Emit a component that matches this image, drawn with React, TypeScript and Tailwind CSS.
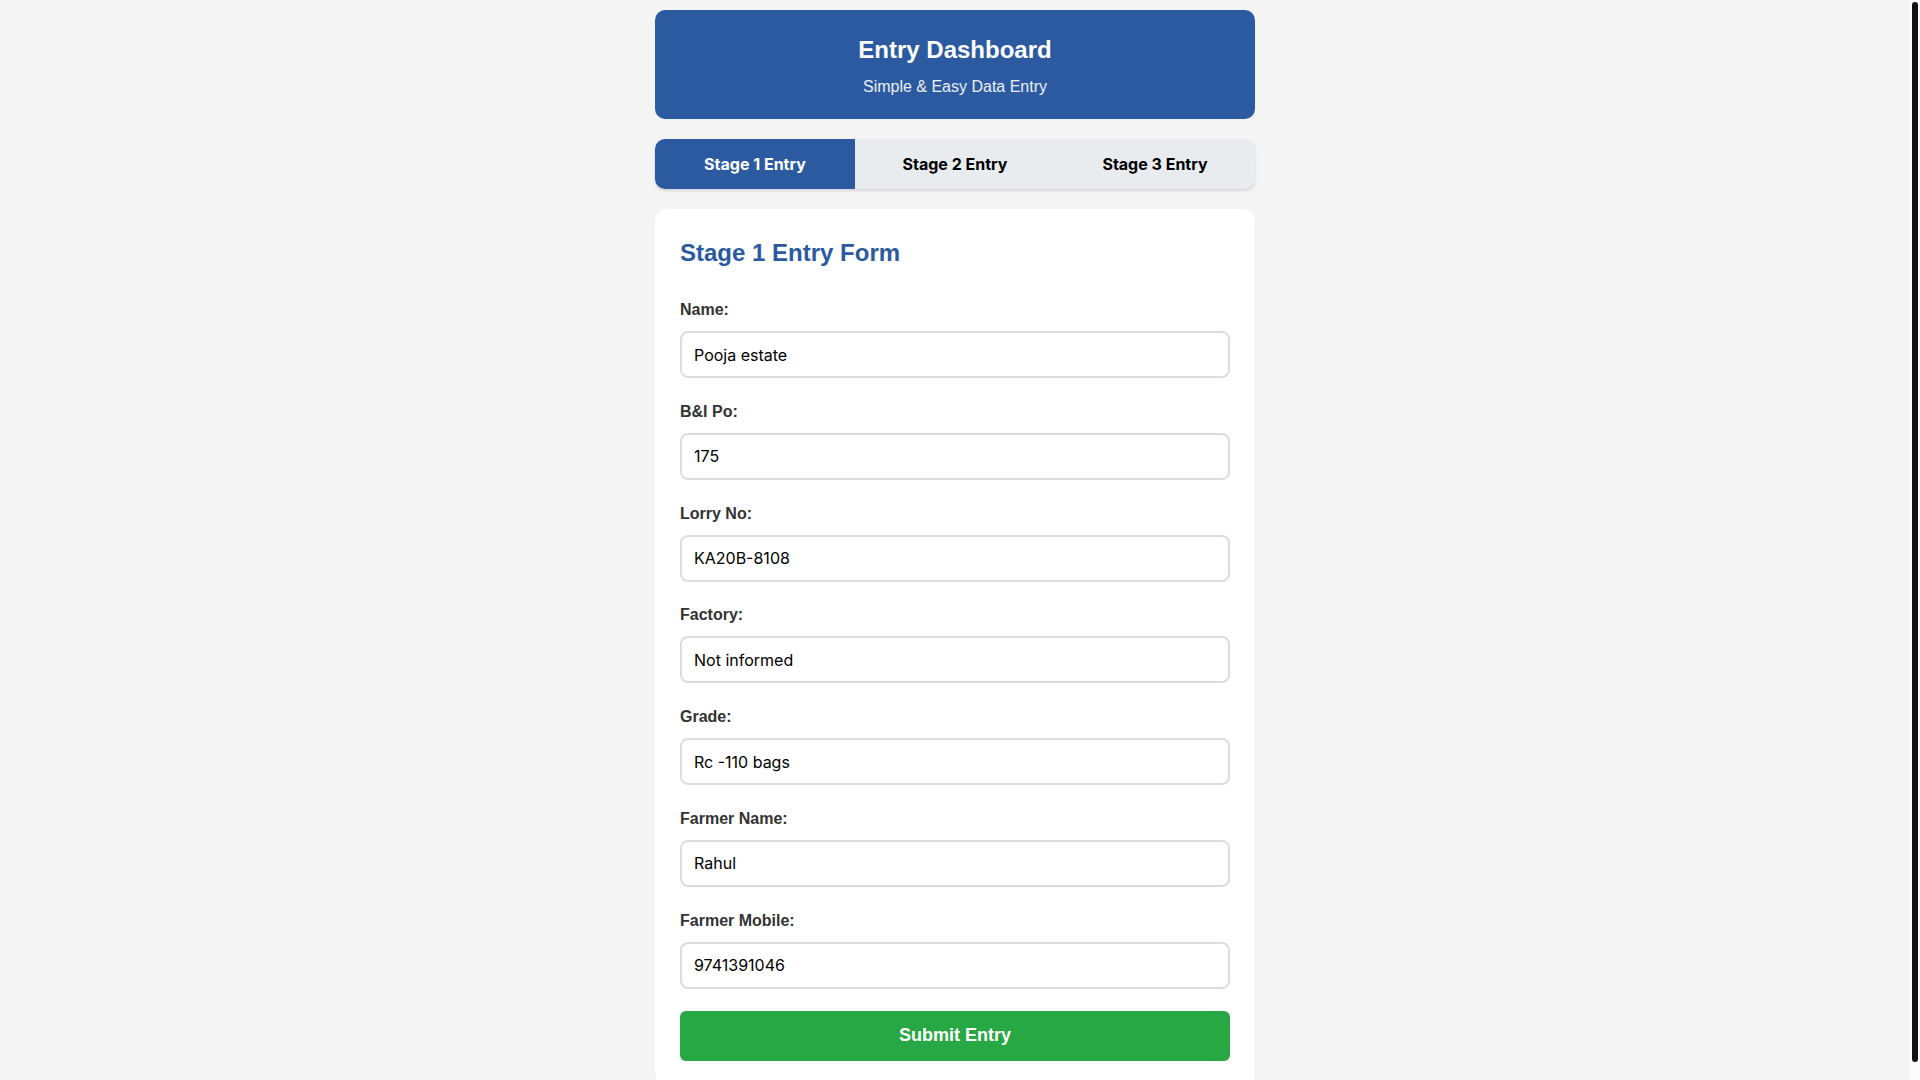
import React, { useState } from "react";

const fields = [
  { label: "Name:", value: "Pooja estate" },
  { label: "B&I Po:", value: "175" },
  { label: "Lorry No:", value: "KA20B-8108" },
  { label: "Factory:", value: "Not informed" },
  { label: "Grade:", value: "Rc -110 bags" },
  { label: "Farmer Name:", value: "Rahul" },
  { label: "Farmer Mobile:", value: "9741391046" },
];

const tabs = ["Stage 1 Entry", "Stage 2 Entry", "Stage 3 Entry"];

export default function App() {
  const [active, setActive] = useState(0);
  const [values, setValues] = useState(fields.map((f) => f.value));

  return (
    <div className="flex h-screen w-full overflow-hidden bg-[#f4f4f4] font-['Liberation_Sans',Arial,sans-serif] text-[#333]">
      {/* Page content */}
      <div className="min-w-0 flex-1 overflow-y-auto [scrollbar-width:none]">
        <div className="mx-auto w-[600px] py-[10px]">
          {/* Header */}
          <div className="rounded-[10px] bg-[#2b5aa0] pt-[22px] pb-[20px] text-center text-white">
            <h1 className="text-[24px] font-bold leading-9">Entry Dashboard</h1>
            <p className="mt-[7px] text-base leading-6 text-white/90">Simple &amp; Easy Data Entry</p>
          </div>

          {/* Stage tabs */}
          <div className="mt-5 flex h-[50px] overflow-hidden rounded-[10px] bg-[#e9ecef] shadow-[0_2px_3px_rgba(0,0,0,0.12)]">
            {tabs.map((t, i) => (
              <button
                key={t}
                onClick={() => setActive(i)}
                className={
                  "flex-1 font-['Inter',sans-serif] text-[16px] font-bold " +
                  (active === i ? "bg-[#2b5aa0] text-white" : "bg-[#e9ecef] text-black")
                }
              >
                {t}
              </button>
            ))}
          </div>

          {/* Form card */}
          <div className="mt-5 rounded-[12px] bg-white p-[25px] shadow-[0_1px_3px_rgba(0,0,0,0.04)]">
            <h2 className="mt-px mb-[27px] text-[24px] font-bold leading-9 text-[#2b5aa0]">
              Stage {active + 1} Entry Form
            </h2>

            <form onSubmit={(e) => e.preventDefault()}>
              {fields.map((f, i) => (
                <div key={f.label} className="mb-[21.8px]">
                  <label className="mb-[9px] block text-base font-bold leading-6 text-[#333]">{f.label}</label>
                  <input
                    type="text"
                    value={values[i]}
                    onChange={(e) => {
                      const next = [...values];
                      next[i] = e.target.value;
                      setValues(next);
                    }}
                    className="block h-[47px] w-full rounded-[8px] border-2 border-[#ddd] bg-white px-3 font-['Inter',sans-serif] text-base text-black outline-none focus:border-[#2b5aa0]"
                  />
                </div>
              ))}

              <button
                type="submit"
                className="block h-[50px] w-full rounded-[6px] bg-[#28a745] text-[18px] font-bold text-white hover:bg-[#218838]"
              >
                Submit Entry
              </button>
            </form>
          </div>
        </div>
      </div>

      {/* Scrollbar rail */}
      <div className="w-[10px] shrink-0 bg-[#fbfbfb] p-[2px]">
        <div className="h-[1060px] rounded-full bg-[#111]" />
      </div>
    </div>
  );
}
